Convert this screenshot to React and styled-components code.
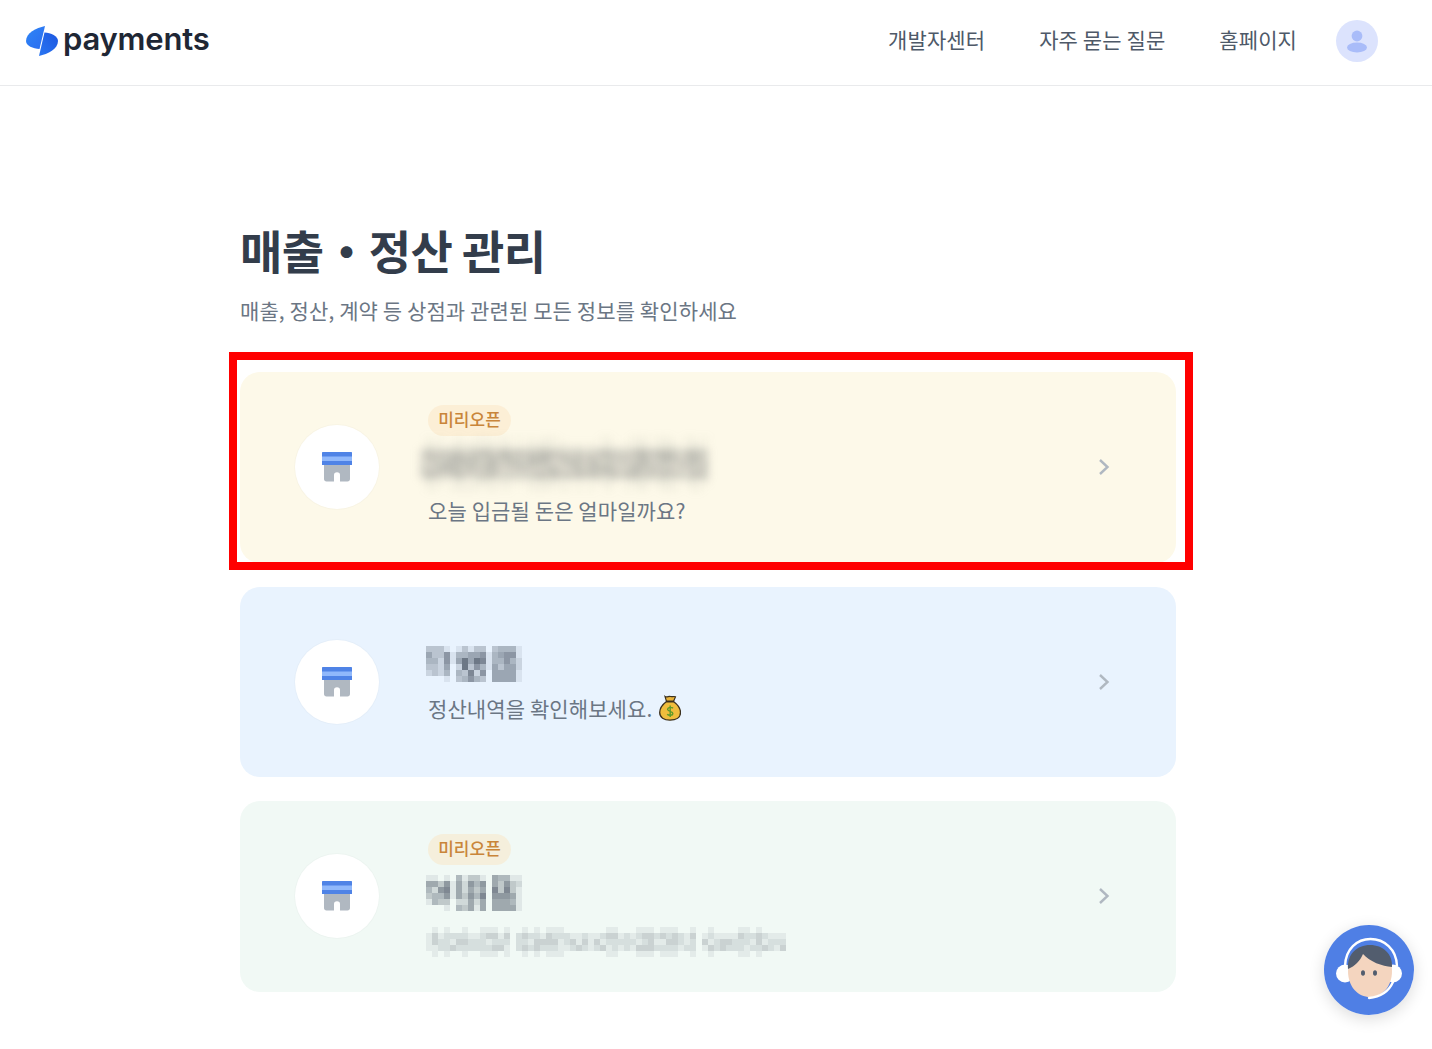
import React from 'react';
import styled, { createGlobalStyle } from 'styled-components';

const GlobalStyle = createGlobalStyle`
  html, body {
    margin: 0;
    padding: 0;
    background: #fff;
  }
  body {
    font-family: "Noto Sans CJK KR", "Noto Sans", sans-serif;
    color: #333d4b;
  }
`;

const Page = styled.div`
  position: relative;
  height: 1049px;
  overflow: hidden;
`;

const Header = styled.header`
  display: flex;
  justify-content: space-between;
  align-items: center;
  height: 81px;
  padding: 0 54px 4px 26px;
  border-bottom: 1px solid #e9eaec;
`;

const LogoLink = styled.a`
  display: flex;
  align-items: center;
  gap: 5px;
`;

const LogoText = styled.span`
  margin-bottom: 3px;
  font-family: "Inter", sans-serif;
  font-size: 31px;
  line-height: 38px;
  font-weight: 600;
  letter-spacing: -0.2px;
  color: #1f2735;
`;

const NavList = styled.nav`
  display: flex;
  align-items: center;
  gap: 54px;
`;

const NavItem = styled.a`
  margin-bottom: 4px;
  font-size: 21px;
  line-height: 30px;
  letter-spacing: 0.1px;
  color: #4e5968;
`;

const UserAvatar = styled.div`
  display: flex;
  justify-content: center;
  align-items: center;
  width: 42px;
  height: 42px;
  margin-left: -15px;
  border-radius: 50%;
  background: #dce3fd;
`;

const Main = styled.main`
  width: 936px;
  margin-left: 240px;
  padding-top: 133px;
`;

const Title = styled.h1`
  margin: 0;
  font-size: 46px;
  line-height: 60px;
  font-weight: 700;
  letter-spacing: -0.6px;
  color: #333d4b;
`;

const Subtitle = styled.p`
  margin: 16px 0 47px;
  font-size: 21px;
  line-height: 30px;
  letter-spacing: 0.1px;
  color: #6b7684;
`;

const CardList = styled.div`
  display: flex;
  flex-direction: column;
  gap: 24px;
`;

const Card = styled.a`
  display: flex;
  align-items: center;
  height: 190.5px;
  padding: 0 66px 0 55px;
  border-radius: 20px;
  background: ${(p) => p.$bg};
`;

const IconCircle = styled.div`
  display: flex;
  flex: none;
  justify-content: center;
  align-items: center;
  width: 84px;
  height: 84px;
  border-radius: 50%;
  background: #fff;
  box-shadow: 0 0 0 1px rgba(0, 0, 0, 0.02);
`;

const CardBody = styled.div`
  flex: 1;
  display: flex;
  flex-direction: column;
  align-items: flex-start;
  margin-left: 49px;
  padding: ${(p) => (p.$plain ? '12px' : '0')} 0 6px;
`;

const Badge = styled.span`
  display: flex;
  justify-content: center;
  align-items: center;
  box-sizing: border-box;
  width: 83px;
  height: 31px;
  margin-bottom: 10px;
  padding-bottom: 3px;
  border-radius: 16px;
  background: ${(p) => p.$bg};
  font-size: 17px;
  font-weight: 500;
  color: #c9853a;
`;

const CardName = styled.div`
  height: 36px;
  margin-left: ${(p) => p.$left || '-2px'};
`;

const CardText = styled.p`
  display: flex;
  align-items: center;
  gap: 7px;
  height: 28px;
  margin: ${(p) => (p.$tight ? '12px 0 2px' : '14px 0 0')};
  font-size: 21px;
  line-height: 28px;
  letter-spacing: 0.1px;
  color: #6b7684;
`;

const MaskedLine = styled.div`
  height: 26px;
  margin: 16px 0 0 -2px;
`;

const MosaicSvg = styled.svg`
  display: block;
  overflow: visible;
  margin-top: ${(p) => p.$top || 0}px;
  filter: ${(p) => (p.$blur ? `blur(${p.$blur}px)` : 'none')};
`;

const Chevron = styled.svg`
  flex: none;
`;

const ChatButton = styled.a`
  position: absolute;
  left: 1324px;
  top: 925px;
  width: 90px;
  height: 90px;
  border-radius: 50%;
  box-shadow: 0 4px 16px rgba(0, 0, 0, 0.14);
`;

const Highlight = styled.div`
  position: absolute;
  left: 229px;
  top: 352px;
  width: 964px;
  height: 218px;
  box-sizing: border-box;
  border: 8px solid #ff0000;
  pointer-events: none;
`;

const LogoMark = () => (
  <svg width="32" height="32" viewBox="26 25 32 32" aria-hidden="true">
    <defs>
      <linearGradient id="logoLeft" x1="0" y1="0" x2="1" y2="1">
        <stop offset="0" stopColor="#2f86f6" />
        <stop offset="1" stopColor="#2a6cf0" />
      </linearGradient>
      <linearGradient id="logoRight" x1="1" y1="0" x2="0" y2="1">
        <stop offset="0" stopColor="#1c57e0" />
        <stop offset="1" stopColor="#2a76f2" />
      </linearGradient>
    </defs>
    <path d="M45 26C36 28 26 33 26 41C26 46 33 48.5 39.5 49Z" fill="url(#logoLeft)" />
    <path d="M39 56C48 54 58 49 58 41C58 36 51 33 44.5 32.5Z" fill="url(#logoRight)" />
  </svg>
);

const UserIcon = () => (
  <svg width="22" height="24" viewBox="0 0 22 24" aria-hidden="true">
    <circle cx="11" cy="7" r="5.4" fill="#a9bcf9" />
    <ellipse cx="11" cy="18.5" rx="10" ry="5" fill="#a9bcf9" />
  </svg>
);

const StoreIcon = () => (
  <svg width="30" height="30" viewBox="0 0 30 30" aria-hidden="true">
    <path d="M2 12H28V27C28 28.4 27 29.5 25.5 29.5H18V23C18 21.2 17 20.2 15 20.2C13 20.2 12 21.2 12 23V29.5H4.5C3 29.5 2 28.4 2 27Z" fill="#b0b8c1" />
    <path d="M0 1C0 0.4 0.4 0 1 0H29C29.6 0 30 0.4 30 1V13H0Z" fill="#4f83e6" />
    <rect x="0" y="4.5" width="30" height="4.5" fill="#90b8fb" />
  </svg>
);

const ChevronRight = () => (
  <Chevron width="12" height="18" viewBox="0 0 12 18" aria-hidden="true">
    <path d="M2 2L9.5 9L2 16" fill="none" stroke="#b0b8c1" strokeWidth="2.4" />
  </Chevron>
);

const MoneyBag = () => (
  <svg width="22" height="26" viewBox="0 0 22 26" aria-hidden="true">
    <path d="M6 1.5C8 2.8 9.5 1 11.5 1.5C13.5 2 15 1 16.5 1.8L14.5 6.5H7.5Z" fill="#e8b23a" stroke="#3a3020" strokeWidth="1.2" />
    <path d="M7.5 6.5H14.5C18.5 9.5 21.5 13 21.5 17.5C21.5 22.5 17 25.2 11 25.2C5 25.2 0.7 22.5 0.7 17.5C0.7 13 3.5 9.5 7.5 6.5Z" fill="#f0bd3d" stroke="#3a3020" strokeWidth="1.3" />
    <path d="M7 6.5H15" stroke="#3a3020" strokeWidth="1.6" />
    <path d="M14 13.2C13 12 9 12 8.6 14.2C8.3 16.6 14 16 13.9 18.6C13.7 20.8 9.5 20.6 8.2 19.2M11.2 10.6V22" fill="none" stroke="#5d9a2a" strokeWidth="1.4" />
  </svg>
);

const AgentIcon = () => (
  <svg width="90" height="90" viewBox="0 0 90 90" aria-hidden="true">
    <circle cx="45" cy="45" r="45" fill="#4f7fe5" />
    <circle cx="21" cy="48.5" r="9" fill="#fff" />
    <circle cx="69" cy="48.5" r="9" fill="#fff" />
    <path d="M24 46C24 30 33 21 46 21C59 21 68 30 68 46C68 62 58 72 46 72C34 72 24 62 24 46Z" fill="#f4d5bf" />
    <path d="M24 44C23 29 33 20 46 20C59 20 69 29 68 42C58 41 46 37 39 29C36 36 31 41 24 44Z" fill="#525d6e" />
    <path d="M21 41C21.5 24 33 14 46.5 14C60 14 72.5 24 73 41" fill="none" stroke="#fff" strokeWidth="2.4" />
    <path d="M69 57C64 68 56 72 45 73" fill="none" stroke="#fff" strokeWidth="2.4" strokeLinecap="round" />
    <ellipse cx="39" cy="48" rx="2" ry="2.8" fill="#525d6e" />
    <ellipse cx="51" cy="48" rx="2" ry="2.8" fill="#525d6e" />
  </svg>
);

// each digit is the strength of one censored block
const Mosaic = ({ rows, color, blur, top, scale = 0.1 }) => (
  <MosaicSvg $blur={blur} $top={top} width={rows[0].length * 6} height={rows.length * 6} aria-hidden="true">
    {rows.map((row, y) => row.split('').map((v, x) => (
      <rect key={`${x}-${y}`} x={x * 6} y={y * 6} width="6" height="6" fill={color} fillOpacity={Number(v) * scale} />
    )))}
  </MosaicSvg>
);

const noise = (x, y) => {
  const n = Math.sin(x * 12.9898 + y * 78.233) * 43758.5453;
  return n - Math.floor(n);
};

const makeRows = (cols, count, min, spread, gaps = []) => Array.from({ length: count }, (_, y) => (
  Array.from({ length: cols }, (_x, x) => (
    gaps.includes(x) ? 0 : Math.floor(min + noise(x, y) * spread)
  )).join('')
));

const nameRowsBlue = [
  '3331013133034441',
  '5336144556145661',
  '4426158587144642',
  '3325028364153552',
  '2324043726055551',
  '0001034643055551',
];

const nameRowsGreen = [
  '1101041331054411',
  '5536152646053632',
  '4267152535073731',
  '3446153647066651',
  '1433022525055541',
  '0001043515055551',
];

// soft halo above and below the darker band of the blurred name
const blurRows = [
  ...makeRows(48, 2, 0, 2),
  ...makeRows(48, 5, 3, 4),
  ...makeRows(48, 2, 0, 2),
];
const textRows = [
  ...makeRows(60, 1, 0, 2, [14, 45]),
  ...makeRows(60, 3, 1, 3, [14, 45]),
  ...makeRows(60, 1, 0, 2, [14, 45]),
];

const App = () => (
  <Page>
    <GlobalStyle />
    <Header>
      <LogoLink>
        <LogoMark />
        <LogoText>payments</LogoText>
      </LogoLink>
      <NavList>
        <NavItem>개발자센터</NavItem>
        <NavItem>자주 묻는 질문</NavItem>
        <NavItem>홈페이지</NavItem>
        <UserAvatar><UserIcon /></UserAvatar>
      </NavList>
    </Header>
    <Main>
      <Title>매출・정산 관리</Title>
      <Subtitle>매출, 정산, 계약 등 상점과 관련된 모든 정보를 확인하세요</Subtitle>
      <CardList>
        <Card $bg="#fdf9e9">
          <IconCircle><StoreIcon /></IconCircle>
          <CardBody>
            <Badge $bg="#fcefd6">미리오픈</Badge>
            <CardName $left="-8px"><Mosaic rows={blurRows} color="#8d8f8c" blur={4} top={-9} /></CardName>
            <CardText>오늘 입금될 돈은 얼마일까요?</CardText>
          </CardBody>
          <ChevronRight />
        </Card>
        <Card $bg="#e9f3fe">
          <IconCircle><StoreIcon /></IconCircle>
          <CardBody $plain>
            <CardName><Mosaic rows={nameRowsBlue} color="#4e5968" /></CardName>
            <CardText $tight>정산내역을 확인해보세요. <MoneyBag /></CardText>
          </CardBody>
          <ChevronRight />
        </Card>
        <Card $bg="#f1f9f5">
          <IconCircle><StoreIcon /></IconCircle>
          <CardBody>
            <Badge $bg="#f5efdc">미리오픈</Badge>
            <CardName><Mosaic rows={nameRowsGreen} color="#4e5968" /></CardName>
            <MaskedLine><Mosaic rows={textRows} color="#6f7780" /></MaskedLine>
          </CardBody>
          <ChevronRight />
        </Card>
      </CardList>
    </Main>
    <ChatButton><AgentIcon /></ChatButton>
    <Highlight />
  </Page>
);

export default App;
